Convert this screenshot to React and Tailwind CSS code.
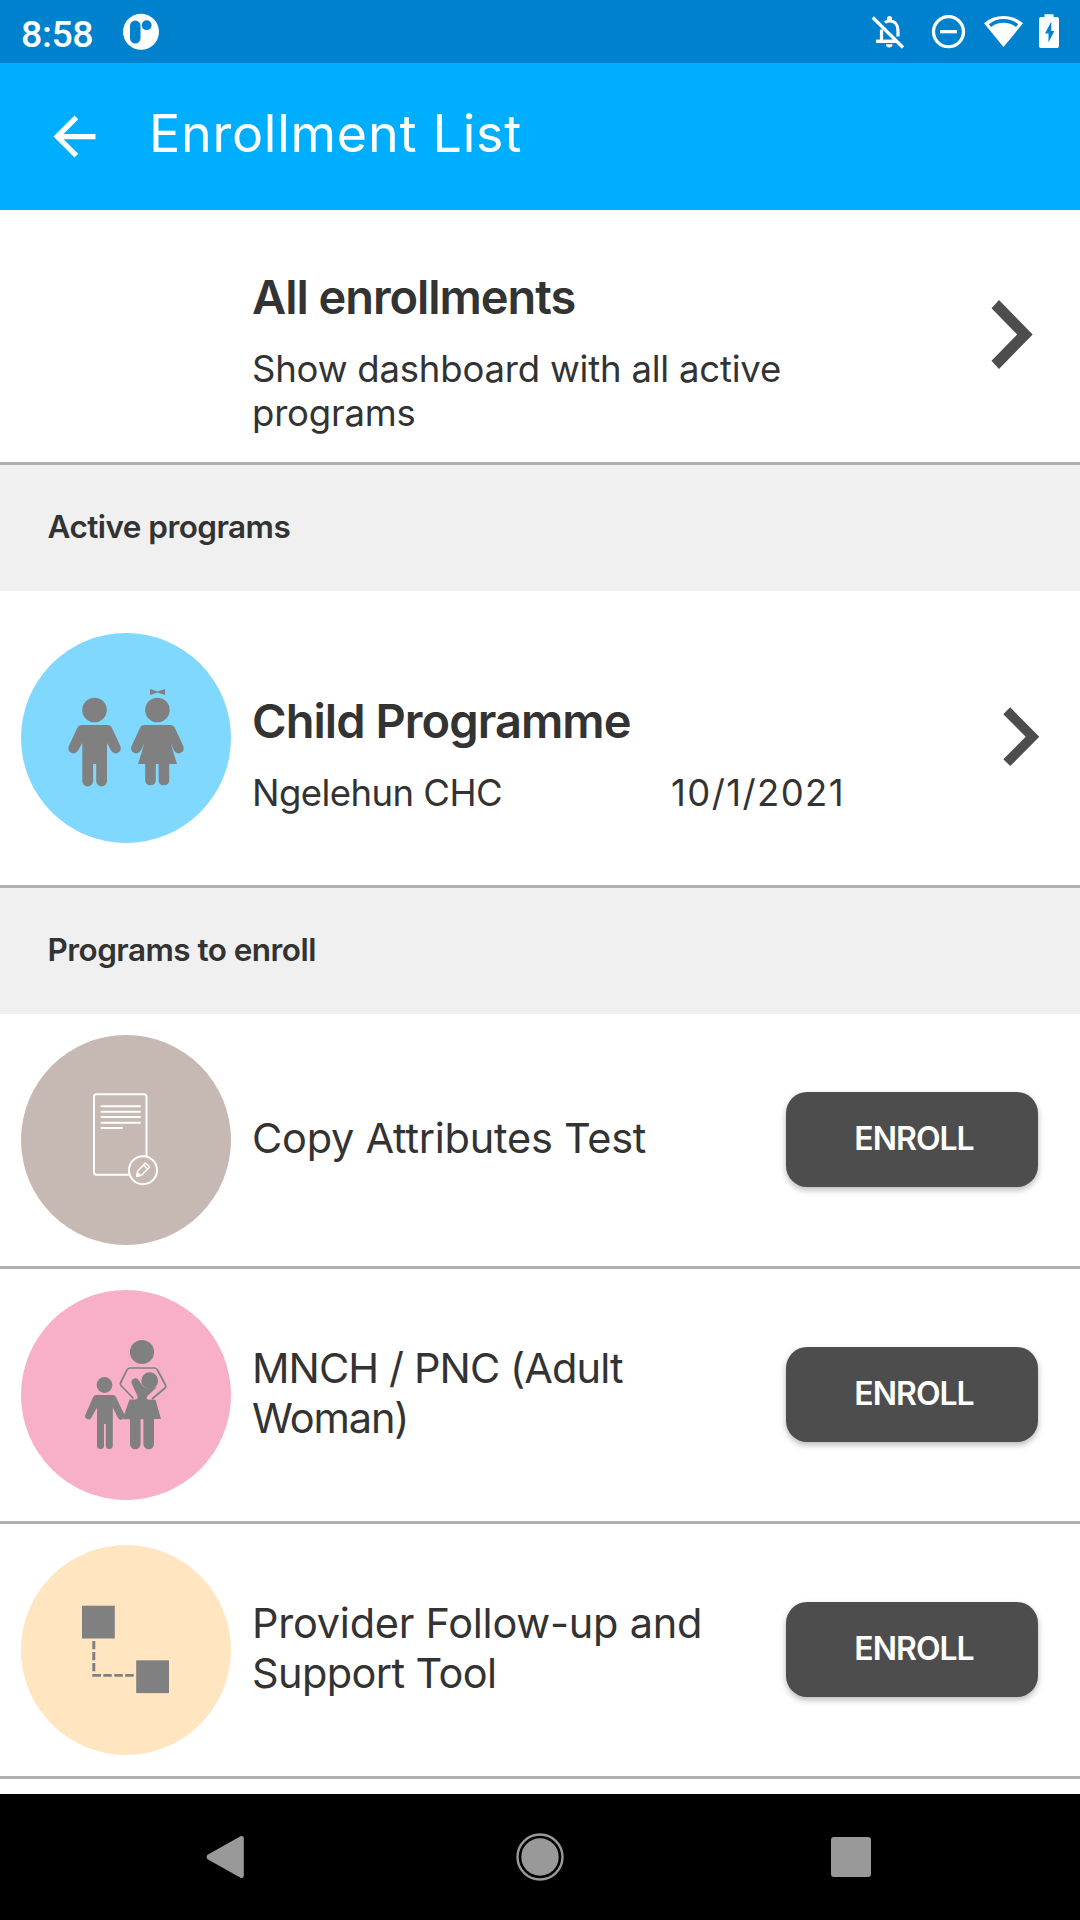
import React from "react";

const GREY = "#808080";

function StatusBar() {
  return (
    <div className="flex h-[63px] items-center justify-between bg-[#0081cd] text-white">
      <div className="flex items-center">
        <span className="ml-[21px] w-[102px] pt-[5px] font-['Roboto',sans-serif] text-[37.5px] leading-[48px] font-medium tracking-[-0.4px]">8:58</span>
        <svg className="h-[38px] w-[36px]" viewBox="123 13 36 38">
          <circle cx="141" cy="31.8" r="18" fill="#fff" />
          <rect x="130" y="20.5" width="10.5" height="23" rx="5.2" fill="#0081cd" />
          <circle cx="146.7" cy="25.2" r="4.9" fill="#0081cd" />
        </svg>
      </div>
      <svg className="h-[63px] w-[220px]" viewBox="860 0 220 63" fill="none">
        <g stroke="#fff" strokeWidth="3.2">
          <path d="M881.5 42V29.5M885 22.5c1.500-1.200 3-1.500 4.500-1.500 5.500 0 8.500 4 8.500 9.500v6" />
          <path d="M876 41.300h20" strokeWidth="3.400" />
          <path d="M872.800 17.500 903 47.500" />
        </g>
        <path d="M887 20v-1.500a2.500 2.500 0 0 1 5 0V20zM886 44.200h6.500a3.200 3.200 0 0 1-6.500 0z" fill="#fff" />
        <circle cx="948.500" cy="31.700" r="15" stroke="#fff" strokeWidth="3.300" />
        <path d="M940 31.700h17" stroke="#fff" strokeWidth="3.300" />
        <path d="M984 23.300a29.500 29.500 0 0 1 39 0L1003.500 47z" fill="#fff" />
        <path d="M988.800 24.200a23.500 23.500 0 0 1 29.400 0l-2.300 2.800a20.500 20.500 0 0 0-24.800 0z" fill="#0081cd" />
        <path d="M1044.500 17v-2.700h9V17h3.500a2 2 0 0 1 2 2v27a2 2 0 0 1-2 2h-16a2 2 0 0 1-2-2V19a2 2 0 0 1 2-2z" fill="#fff" />
        <path d="M1051.300 21.500v9.500h3l-5.800 11.500v-9h-3.500z" fill="#0081cd" />
      </svg>
    </div>
  );
}

function Header() {
  return (
    <header className="flex h-[147px] items-center bg-[#00aeff] text-white">
      <svg className="ml-[42.500px] h-[63px] w-[63px]" viewBox="0 0 24 24" fill="#fff">
        <path d="M20 11H7.830l5.590-5.590L12 4l-8 8 8 8 1.410-1.410L7.830 13H20v-2z" />
      </svg>
      <h1 className="ml-[43.500px] pb-[5px] text-[52px] leading-[60px] tracking-[0.750px]">Enrollment List</h1>
    </header>
  );
}

function Section({ children }) {
  return (
    <div className="flex h-[126px] items-center bg-[#f0f0f0] pb-[3px] pl-[47.500px] text-[31.5px] font-semibold tracking-[-0.550px]">
      {children}
    </div>
  );
}

function ChildrenIcon() {
  return (
    <svg className="h-[210px] w-[210px] shrink-0 rounded-full bg-[#80d8ff]" viewBox="21 633 210 210" fill={GREY}>
      <circle cx="94.500" cy="710" r="12.300" />
      <path d="M81.500 725h26a5 5 0 0 1 4.500 3l8.300 18a5 5 0 0 1-9.200 4.500L107 743v38a5.400 5.400 0 0 1-10.800 0v-17h-3.100v17a5.400 5.400 0 0 1-10.800 0v-38l-4.200 7.500a5 5 0 0 1-9.200-4.500l8.300-18a5 5 0 0 1 4.300-3z" />
      <circle cx="157.400" cy="710" r="12.300" />
      <path d="M144.400 725h26a5 5 0 0 1 4.500 3l8.300 18a5 5 0 0 1-9.200 4.500l-3.300-7 6.300 20.500h-7.800v17a5.400 5.400 0 0 1-10.600 0v-17h-2.800v17a5.400 5.400 0 0 1-10.600 0v-17H138l6.300-20.500-3.500 7a5 5 0 0 1-9.200-4.500l8.300-18a5 5 0 0 1 4.500-3z" />
      <path d="M150 689l7.500 2.500 7.500-2.500v6l-7.500-2.500-7.500 2.500z" />
    </svg>
  );
}

function DocumentIcon() {
  return (
    <svg className="h-[210px] w-[210px] shrink-0 rounded-full bg-[#c6b8b2]" viewBox="21 1035 210 210" fill="none" stroke="#fff" strokeWidth="2" strokeLinecap="round" strokeLinejoin="round">
      <path d="M129 1174.800H96.500a2.500 2.500 0 0 1-2.500-2.500v-75.500a2.500 2.500 0 0 1 2.500-2.500h47.500a2.500 2.500 0 0 1 2.500 2.500v59" />
      <path d="M101.500 1106.300h38.500M101.500 1111.700h38.500M101.500 1117.100h38.500M101.500 1122.700h38.500M101.500 1128.100h20.500" />
      <circle cx="143" cy="1170.200" r="14" />
      <path d="M136.600 1176.400l1-5.200 7.800-8.200 4.200 4-7.800 8z M143.500 1165l4 4" strokeWidth="1.400" />
      <path d="M136.600 1176.400l.8-4.200 3.400 3z" fill="#fff" strokeWidth="1" />
    </svg>
  );
}

function MotherIcon() {
  return (
    <svg className="h-[210px] w-[210px] shrink-0 rounded-full bg-[#f8b0c8]" viewBox="21 1290 210 210" fill={GREY}>
      <circle cx="104.500" cy="1385" r="7.900" />
      <path d="M96 1395h17a3.500 3.500 0 0 1 3 2l8.500 18-2.500 4.500a3.400 3.400 0 0 1-4-1.500l-5.200-10.500V1445.500a3.500 3.500 0 0 1-7 0V1424h-1.800v21.500a3.500 3.500 0 0 1-7 0V1407.500l-5.800 10.500a3.400 3.400 0 0 1-6-3l8-18a3.500 3.500 0 0 1 2.800-2z" />
      <circle cx="142" cy="1352" r="12.100" />
      <path d="M133.500 1398.500 121 1385.500a2.500 2.500 0 0 1-.3-3l6.300-12.500a3.500 3.500 0 0 1 3-2h24.500a3.500 3.500 0 0 1 3 2l8 15a2.500 2.500 0 0 1-.5 3L152 1399" fill="none" stroke={GREY} strokeWidth="1.700" />
      <path d="M129.500 1399.500h5.500c2 0 3.300-1.800 2.500-3.500l-5.800-12.500a3.900 3.900 0 0 1 7-3.300l4.500 6.300c2.500 2 6 3.500 14 .2l-9.500 9c-2 2-.8 4 1.300 4h6.500l5.500 19.300H154V1444a5.300 5.300 0 0 1-10.600 0v-24.700h-2.800V1444a5.300 5.300 0 0 1-10.600 0v-24.700h-7.500z" />
      <circle cx="149.700" cy="1380.700" r="8.400" />
    </svg>
  );
}

function FlowIcon() {
  return (
    <svg className="h-[210px] w-[210px] shrink-0 rounded-full bg-[#ffe5c0]" viewBox="21 1545 210 210" fill={GREY}>
      <rect x="82" y="1605.700" width="32.800" height="32.800" />
      <rect x="136.200" y="1660.300" width="32.800" height="32.800" />
      <path d="M92.300 1641h3v8.300h-3zM92.300 1652h3v8.300h-3zM92.300 1663h3v8.300h-3zM92.300 1674h8.700v2.800h-8.700zM103.300 1674h8.500v2.800h-8.500zM114.300 1674h8.500v2.800h-8.500zM125.200 1674h8.500v2.800h-8.500z" />
    </svg>
  );
}

function ProgramRow({ icon, lines }) {
  return (
    <div className="flex h-[255px] items-center border-b-[3px] border-[#b0b0b0] pl-[21px]">
      {icon}
      <div className="ml-[21px] w-[513px] pb-[4px] text-[41.5px] leading-[50px]">
        {lines.map(([text, cls]) => (
          <div key={text} className={`whitespace-nowrap ${cls}`}>{text}</div>
        ))}
      </div>
      <button className="mb-[2px] ml-[21px] flex h-[95px] w-[252px] items-center justify-center rounded-[21px] bg-[#4d4d4d] pl-[4px] text-[32px] font-semibold tracking-[-1px] text-white shadow-[0_3px_6px_rgba(0,0,0,0.28)]">
        ENROLL
      </button>
    </div>
  );
}

export default function App() {
  return (
    <div className="flex h-[1920px] w-[1080px] flex-col overflow-hidden bg-white font-['Inter',sans-serif] text-[#333333]">
      <StatusBar />
      <Header />
      <div className="flex h-[255px] border-b-[3px] border-[#b0b0b0]">
        <div className="ml-[252px] w-[739px] pt-[59px]">
          <h2 className="text-[47px] leading-[56px] font-semibold tracking-[-1.05px]">All enrollments</h2>
          <p className="mt-[23px] w-[560px] text-[36.5px] leading-[43.750px] tracking-[-0.2px]">Show dashboard with all active programs</p>
        </div>
        <svg className="mt-[90px] h-[70px] w-[42px]" viewBox="991 300 42 70" fill="#4d4d4d">
          <path d="M999 300l33.700 34.500L999 369l-7.500-8.200 25.700-26.300-25.700-26.200z" />
        </svg>
      </div>
      <Section>Active programs</Section>
      <div className="flex h-[297px] border-b-[3px] border-[#b0b0b0] pl-[21px]">
        <div className="mt-[42px]"><ChildrenIcon /></div>
        <div className="ml-[21px] w-[751px] pt-[102px]">
          <h2 className="text-[47px] leading-[56px] font-semibold tracking-[-0.950px]">Child Programme</h2>
          <div className="mt-[23px] flex text-[36.5px] leading-[43.750px]">
            <span className="w-[419px] tracking-[-0.550px]">Ngelehun CHC</span>
            <span className="tracking-[1.4px]">10/1/2021</span>
          </div>
        </div>
        <svg className="mt-[116px] h-[60px] w-[37px]" viewBox="1003 707 37 60" fill="#4d4d4d">
          <path d="M1010.200 707.300l29.100 29.400-29.100 29.400-6.900-6.900 22.400-22.500-22.400-22.500z" />
        </svg>
      </div>
      <Section>Programs to enroll</Section>
      <ProgramRow icon={<DocumentIcon />} lines={[["Copy Attributes Test", "tracking-[-0.25px]"]]} />
      <ProgramRow icon={<MotherIcon />} lines={[["MNCH / PNC (Adult", "tracking-[-0.9px]"], ["Woman)", "tracking-[-1.1px]"]]} />
      <ProgramRow icon={<FlowIcon />} lines={[["Provider Follow-up and", "tracking-[-0.25px]"], ["Support Tool", "tracking-[-0.6px]"]]} />
      <nav className="mt-auto h-[126px] shrink-0 bg-black">
        <svg className="h-[126px] w-[1080px]" viewBox="0 1794 1080 126" fill="#999999">
          <path d="M208 1854.500l32.500-18.200a2.200 2.200 0 0 1 3.300 2v37.400a2.200 2.200 0 0 1-3.300 2L208 1859.500a2.900 2.900 0 0 1 0-5z" />
          <circle cx="540" cy="1857" r="22.500" fill="none" stroke="#999999" strokeWidth="2.400" />
          <circle cx="540" cy="1857" r="18.700" />
          <rect x="831" y="1837" width="40" height="40" rx="3" />
        </svg>
      </nav>
    </div>
  );
}
